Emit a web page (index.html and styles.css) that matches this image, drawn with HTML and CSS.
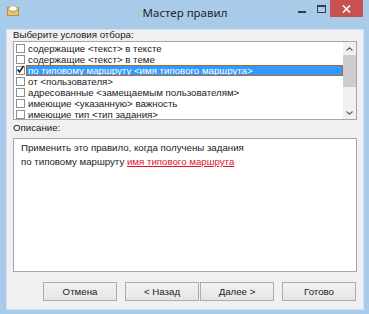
FILE: index.html
```html
<!DOCTYPE html>
<html lang="ru">
<head>
<meta charset="utf-8">
<title>Мастер правил</title>
<link rel="stylesheet" href="styles.css">
</head>
<body>
<div class="window">
  <div class="titlebar">
    <div class="tb-left">
      <svg class="app-icon" width="12" height="11" viewBox="0 0 12 11">
        <rect x="0.5" y="2.5" width="11" height="8" fill="#e3c47a" stroke="#b8923e"/>
        <path d="M2 2.5 L6 0.5 L10 2.5 L10 6 L2 6 Z" fill="#ffffff" stroke="#c9a860" stroke-width="0.8"/>
        <path d="M0.5 4 L6 7.5 L11.5 4" fill="none" stroke="#c49a46" stroke-width="0.8"/>
      </svg>
    </div>
    <div class="title">Мастер правил</div>
    <div class="controls">
      <span class="btn-min"></span>
      <span class="btn-max"></span>
      <span class="btn-close">
        <svg width="9" height="8" viewBox="0 0 9 8"><path d="M1 0.5 L8 7.5 M8 0.5 L1 7.5" stroke="#ffffff" stroke-width="1.6"/></svg>
      </span>
    </div>
  </div>
  <div class="client">
    <div class="label">Выберите условия отбора:</div>
    <div class="listbox">
      <div class="rows">
        <div class="row"><span class="cb"></span><span class="txt">содержащие &lt;текст&gt; в тексте</span></div>
        <div class="row"><span class="cb"></span><span class="txt">содержащие &lt;текст&gt; в теме</span></div>
        <div class="row"><span class="cb checked"><svg width="9" height="9" viewBox="0 0 9 9"><path d="M1.5 4.5 L3.5 7 L7.5 1" fill="none" stroke="#1a1a1a" stroke-width="1.5"/></svg></span><span class="txt selected">по типовому маршруту &lt;имя типового маршрута&gt;</span></div>
        <div class="row"><span class="cb"></span><span class="txt">от &lt;пользователя&gt;</span></div>
        <div class="row"><span class="cb"></span><span class="txt">адресованные &lt;замещаемым пользователям&gt;</span></div>
        <div class="row"><span class="cb"></span><span class="txt">имеющие &lt;указанную&gt; важность</span></div>
        <div class="row"><span class="cb"></span><span class="txt">имеющие тип &lt;тип задания&gt;</span></div>
      </div>
      <div class="scrollbar">
        <div class="arrow"><svg width="7" height="4" viewBox="0 0 7 4"><path d="M0.5 3.5 L3.5 0.8 L6.5 3.5" fill="none" stroke="#606060" stroke-width="1.2"/></svg></div>
        <div class="track"><div class="thumb"></div></div>
        <div class="arrow"><svg width="7" height="4" viewBox="0 0 7 4"><path d="M0.5 0.5 L3.5 3.2 L6.5 0.5" fill="none" stroke="#606060" stroke-width="1.2"/></svg></div>
      </div>
    </div>
    <div class="label label-desc">Описание:</div>
    <div class="desc">
      <div class="desc-line">Применить это правило, когда получены задания</div>
      <div class="desc-line">по типовому маршруту <a class="link" href="#">имя типового маршрута</a></div>
    </div>
    <div class="buttons">
      <button class="btn">Отмена</button>
      <button class="btn btn-back">&lt; Назад</button>
      <button class="btn btn-next">Далее &gt;</button>
      <button class="btn btn-finish">Готово</button>
    </div>
  </div>
</div>
</body>
</html>
```
FILE: styles.css
```css
* { box-sizing: border-box; }
html, body { margin: 0; padding: 0; }
body {
  width: 369px;
  height: 314px;
  overflow: hidden;
  font-family: "Liberation Sans", Arial, sans-serif;
  font-size: 9.7px;
  color: #1a1a1a;
}
.window {
  width: 369px;
  height: 314px;
  background: #a9cbea;
  display: flex;
  flex-direction: column;
}
.titlebar {
  height: 30px;
  display: grid;
  grid-template-columns: 1fr auto 1fr;
}
.tb-left { padding: 5px 0 0 7px; }
.app-icon { display: block; }
.title {
  font-family: "Noto Sans", "Open Sans", sans-serif;
  font-size: 11.5px;
  line-height: 26px;
  color: #262626;
  padding-left: 1px;
}
.controls {
  display: flex;
  justify-content: flex-end;
  align-items: flex-start;
  padding-right: 6px;
}
.btn-min {
  width: 8px;
  height: 2px;
  background: #3c3c3c;
  margin-top: 11px;
  margin-right: 11px;
}
.btn-max {
  width: 9px;
  height: 8px;
  border: 1px solid #3c3c3c;
  border-top-width: 2px;
  margin-top: 5px;
  margin-right: 4px;
}
.btn-close {
  width: 33px;
  height: 17px;
  background: #c75050;
  display: flex;
  align-items: center;
  justify-content: center;
}
.btn-close svg { display: block; }
.client {
  margin: 0 6px 5px 7px;
  height: 279px;
  background: #f0f0f0;
  box-shadow: 0 0 0 1px #cfe1f3;
  padding: 0 6px 0 6px;
  display: flex;
  flex-direction: column;
}
.label {
  height: 11px;
  line-height: 10px;
  padding-left: 0;
}
.listbox {
  height: 79px;
  border: 1px solid #a3a6ad;
  background: #ffffff;
  display: flex;
}
.rows {
  flex: 1;
  padding: 1px 0 0 2px;
  overflow: hidden;
}
.row {
  height: 11px;
  display: flex;
  align-items: center;
}
.cb {
  width: 9px;
  height: 9px;
  border: 1px solid #8e8f8f;
  background: #ffffff;
  margin-right: 1px;
  flex: none;
  position: relative;
}
.cb.checked svg {
  position: absolute;
  left: -1px;
  top: -2px;
}
.txt {
  padding-left: 2px;
  line-height: 11px;
  height: 11px;
  white-space: nowrap;
}
.txt.selected {
  flex: 1;
  background: #3399ff;
  color: #ffffff;
  outline: 1px solid #a86c2e;
  outline-offset: -1px;
}
.scrollbar {
  width: 13px;
  background: #f0f0f0;
  display: flex;
  flex-direction: column;
}
.arrow {
  height: 13px;
  display: flex;
  align-items: center;
  justify-content: center;
}
.arrow svg { display: block; }
.track { flex: 1; }
.thumb {
  height: 32px;
  background: #cdcdcd;
}
.label-desc {
  height: 18px;
  line-height: 16px;
}
.desc {
  height: 134px;
  border: 1px solid #a3a6ad;
  background: #ffffff;
  padding: 2px 7px;
}
.desc-line {
  height: 14px;
  line-height: 14px;
  white-space: nowrap;
}
.link {
  color: #e3132c;
  text-decoration: underline;
}
.buttons {
  display: flex;
  justify-content: flex-end;
  margin-top: 10px;
  padding-right: 1px;
}
.btn {
  width: 74px;
  height: 19px;
  border: 1px solid #acacac;
  background: linear-gradient(#f2f2f2, #e5e5e5);
  font-family: "Liberation Sans", Arial, sans-serif;
  font-size: 9.7px;
  color: #1a1a1a;
  padding: 0;
  margin: 0;
}
.btn-back { margin-left: 8px; }
.btn-next { margin-left: 1px; }
.btn-finish { margin-left: 8px; }
```
